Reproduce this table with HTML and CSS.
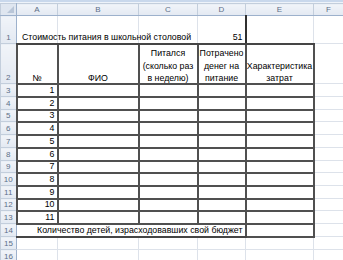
FILE: index.html
```html
<!DOCTYPE html>
<html>
<head>
<meta charset="utf-8">
<link rel="stylesheet" href="styles.css">
</head>
<body>
<div class="strip"></div>
<table class="sheet">
  <colgroup>
    <col class="c-rh"><col class="c-a"><col class="c-b"><col class="c-c"><col class="c-d"><col class="c-e"><col class="c-f">
  </colgroup>
  <tr class="r-h">
    <th class="corner"><span class="tri"></span></th><th class="ch">A</th><th class="ch">B</th><th class="ch">C</th><th class="ch">D</th><th class="ch">E</th><th class="ch">F</th>
  </tr>
  <tr class="r-1">
    <th class="rh">1</th>
    <td class="title"><span class="over">Стоимость питания в школьной столовой</span></td>
    <td class="bb"></td><td class="bb"></td>
    <td class="bb d1 num">51</td>
    <td class="bb"></td><td></td>
  </tr>
  <tr class="r-2">
    <th class="rh">2</th>
    <td class="t hd"><div class="lines">№</div></td>
    <td class="t hd"><div class="lines">ФИО</div></td>
    <td class="t hd"><div class="lines">Питался<br>(сколько раз<br>в неделю)</div></td>
    <td class="t hd"><div class="lines">Потрачено<br>денег на<br>питание</div></td>
    <td class="t hd"><div class="lines">Характеристика<br>затрат</div></td>
    <td></td>
  </tr>
  <tr class="r13"><th class="rh">3</th><td class="t num">1</td><td class="t"></td><td class="t"></td><td class="t"></td><td class="t"></td><td></td></tr>
  <tr class="r13"><th class="rh">4</th><td class="t num">2</td><td class="t"></td><td class="t"></td><td class="t"></td><td class="t"></td><td></td></tr>
  <tr class="r12"><th class="rh">5</th><td class="t num">3</td><td class="t"></td><td class="t"></td><td class="t"></td><td class="t"></td><td></td></tr>
  <tr class="r13"><th class="rh">6</th><td class="t num">4</td><td class="t"></td><td class="t"></td><td class="t"></td><td class="t"></td><td></td></tr>
  <tr class="r13"><th class="rh">7</th><td class="t num">5</td><td class="t"></td><td class="t"></td><td class="t"></td><td class="t"></td><td></td></tr>
  <tr class="r13"><th class="rh">8</th><td class="t num">6</td><td class="t"></td><td class="t"></td><td class="t"></td><td class="t"></td><td></td></tr>
  <tr class="r12"><th class="rh">9</th><td class="t num">7</td><td class="t"></td><td class="t"></td><td class="t"></td><td class="t"></td><td></td></tr>
  <tr class="r13"><th class="rh">10</th><td class="t num">8</td><td class="t"></td><td class="t"></td><td class="t"></td><td class="t"></td><td></td></tr>
  <tr class="r13"><th class="rh">11</th><td class="t num">9</td><td class="t"></td><td class="t"></td><td class="t"></td><td class="t"></td><td></td></tr>
  <tr class="r12"><th class="rh">12</th><td class="t num">10</td><td class="t"></td><td class="t"></td><td class="t"></td><td class="t"></td><td></td></tr>
  <tr class="r13"><th class="rh">13</th><td class="t num">11</td><td class="t"></td><td class="t"></td><td class="t"></td><td class="t"></td><td></td></tr>
  <tr class="r13"><th class="rh">14</th><td colspan="4" class="total">Количество детей, израсходовавших свой бюджет</td><td class="t"></td><td></td></tr>
  <tr class="r13"><th class="rh">15</th><td></td><td></td><td></td><td></td><td></td><td></td></tr>
  <tr class="r13"><th class="rh">16</th><td></td><td></td><td></td><td></td><td></td><td></td></tr>
</table>
</body>
</html>
```

FILE: styles.css
```css
html, body {
  margin: 0;
  padding: 0;
  background: #ffffff;
  overflow: hidden;
}
body {
  width: 343px;
  height: 260px;
  font-family: "Liberation Sans", Arial, sans-serif;
  font-size: 8.8px;
  color: #000;
}
.strip {
  height: 2px;
  background: #c9d8ec;
  border-bottom: 1px solid #eef3fa;
}
.sheet {
  border-collapse: collapse;
  table-layout: fixed;
  width: 343px;
}
.c-rh { width: 16px; }
.c-a { width: 41px; }
.c-b { width: 81px; }
.c-c { width: 59px; }
.c-d { width: 48px; }
.c-e { width: 68px; }
.c-f { width: 30px; }

td, th {
  padding: 0;
  border: 1px solid #dde2ea;
  overflow: visible;
  white-space: nowrap;
  line-height: 9px;
}
th {
  font-weight: normal;
  color: #5d6f88;
  background: linear-gradient(#f1f4f9, #e3e9f2);
  border-color: #c3cedc;
  font-size: 8px;
}
.ch {
  border-bottom: 1px solid #9db1cc;
  text-align: center;
}
.corner {
  position: relative;
  background: #dfe6f0;
  border-right: 1px solid #9db1cc;
  border-bottom: 1px solid #9db1cc;
}
.tri {
  position: absolute;
  right: 2px;
  bottom: 2px;
  width: 0;
  height: 0;
  border-left: 7px solid transparent;
  border-bottom: 7px solid #b9c6d8;
}
.rh {
  text-align: center;
  vertical-align: middle;
  border-right: 1px solid #9db1cc;
}
.r-1 .rh, .r-2 .rh {
  vertical-align: bottom;
  padding-bottom: 1px;
}
.r-h { height: 12px; }
.r-1 { height: 28px; }
.r-2 { height: 40px; }
.r13 { height: 13px; }
.r12 { height: 12px; }

td { vertical-align: middle; }
.title {
  vertical-align: bottom;
  padding-left: 5px;
  padding-bottom: 1px;
  border-bottom: 2px solid #454545;
}
.over {
  display: block;
  width: 0;
  overflow: visible;
  white-space: nowrap;
}
.bb { border-bottom: 2px solid #454545; }
.d1 {
  vertical-align: bottom;
  padding-bottom: 1px;
  border-left: 1px solid #8a8a8a;
  border-right: 2px solid #303030;
}
.num {
  text-align: right;
  padding-right: 2px;
}
.t {
  border: 2px solid #505050;
}
.hd {
  vertical-align: bottom;
  text-align: center;
  padding-bottom: 0;
}
.lines {
  line-height: 12.5px;
  margin-bottom: -2px;
}
.total {
  border-bottom: 2px solid #454545;
  text-align: right;
  padding-right: 2px;
}
```
